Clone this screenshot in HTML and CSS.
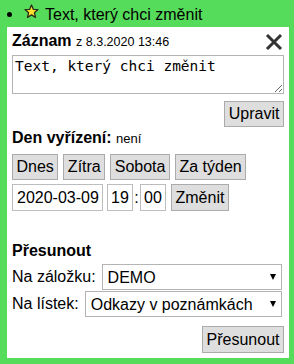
FILE: index.html
```html
<!DOCTYPE html>
<html lang="cs">
<head>
<meta charset="utf-8">
<link rel="stylesheet" href="styles.css">
</head>
<body>
<div class="top">
  <span class="bullet"></span>
  <svg class="star" width="15" height="15" viewBox="0 0 15 15"><polygon points="7.5,1 9.3,5.3 14,5.6 10.4,8.7 11.5,13.4 7.5,10.9 3.5,13.4 4.6,8.7 1,5.6 5.7,5.3" fill="#ffe12e" stroke="#2a2a1a" stroke-width="1.3" stroke-linejoin="round"/></svg>
  <span class="title">Text, který chci změnit</span>
</div>
<div class="panel">
  <div class="head">
    <div><b class="h">Záznam</b> <span class="date">z 8.3.2020 13:46</span></div>
    <svg class="close" width="18" height="18" viewBox="0 0 18 18"><path d="M2 2 L16 16 M16 2 L2 16" stroke="#333" stroke-width="3" fill="none"/></svg>
  </div>
  <textarea class="txt">Text, který chci změnit</textarea>
  <div class="row right r-up"><button class="btn">Upravit</button></div>
  <div class="den"><b class="h">Den vyřízení:</b> <span class="small">není</span></div>
  <div class="row r-quick">
    <button class="btn">Dnes</button>
    <button class="btn">Zítra</button>
    <button class="btn">Sobota</button>
    <button class="btn">Za týden</button>
  </div>
  <div class="row r-date">
    <input class="inp w-date" value="2020-03-09">
    <input class="inp w-time gap-h" value="19">
    <span class="colon">:</span>
    <input class="inp w-time" value="00">
    <button class="btn gap-b">Změnit</button>
  </div>
  <div class="move h">Přesunout</div>
  <div class="row r-sel1">
    <span class="lab">Na záložku:</span>
    <span class="sel"><select><option>DEMO</option></select></span>
  </div>
  <div class="row r-sel2">
    <span class="lab">Na lístek:</span>
    <span class="sel"><select><option>Odkazy v poznámkách</option></select></span>
  </div>
  <div class="row right r-move"><button class="btn tall">Přesunout</button></div>
</div>
</body>
</html>
```
FILE: styles.css
```css
html, body { margin: 0; padding: 0; }
body {
  background: #56dc5b;
  font-family: "Liberation Sans", Arial, sans-serif;
  font-size: 16px;
  line-height: 18px;
  color: #000;
  width: 294px;
  height: 364px;
  overflow: hidden;
}
.top {
  display: flex;
  align-items: flex-start;
  height: 27px;
  padding-left: 7px;
  box-sizing: border-box;
}
.bullet {
  width: 5px;
  height: 5px;
  border-radius: 50%;
  background: #000;
  margin-top: 12px;
  margin-right: 12px;
}
.star { margin-top: 4px; margin-right: 6px; }
.title { margin-top: 6px; }
.panel {
  background: #fff;
  margin: 0 5px 6px 7px;
  padding: 5px;
  box-sizing: border-box;
  height: 331px;
}
.h { font-weight: bold; }
.head {
  display: flex;
  justify-content: space-between;
  align-items: flex-start;
  height: 18px;
}
.date { font-size: 12.5px; }
.close { margin-top: 1px; margin-right: 1px; }
.txt {
  display: block;
  box-sizing: border-box;
  width: 100%;
  height: 39px;
  margin: 5px 0 0;
  padding: 2px 2px;
  border: 1px solid #b4b4b4;
  font-family: "DejaVu Sans Mono", monospace;
  font-size: 14.5px;
  line-height: 17px;
  color: #000;
  resize: vertical;
  outline: none;
}
.row { display: flex; align-items: center; }
.right { justify-content: flex-end; }
.btn {
  font-family: "Liberation Sans", Arial, sans-serif;
  font-size: 16px;
  height: 26px;
  padding: 0 3.5px;
  margin: 0;
  background: #dedede;
  border: 1px solid #ababab;
  border-radius: 0;
  color: #000;
  line-height: 18px;
}
.tall { height: 27px; }
.r-up { margin-top: 7px; }
.den { margin-top: 2px; height: 18px; }
.small { font-size: 13px; }
.r-quick { margin-top: 7px; gap: 5px; }
.r-date { margin-top: 4px; height: 27px; }
.inp {
  box-sizing: border-box;
  height: 27px;
  margin: 0;
  padding: 0 3px;
  border: 1px solid #bdbdbd;
  border-radius: 0;
  font-family: "Liberation Sans", Arial, sans-serif;
  font-size: 16px;
  color: #000;
  background: #fff;
  outline: none;
}
.w-date { width: 91px; padding-left: 4px; }
.w-time { width: 26px; }
.gap-h { margin-left: 4px; }
.colon { width: 7px; text-align: center; }
.gap-b { margin-left: 5px; height: 27px; }
.move { margin-top: 31px; height: 18px; }
.r-sel1 { margin-top: 4px; gap: 6px; height: 26px; }
.r-sel2 { margin-top: 1px; gap: 6px; height: 26px; }
.sel {
  position: relative;
  flex: 1;
  margin-right: 2px;
  display: flex;
}
.sel select {
  -webkit-appearance: none;
  appearance: none;
  width: 100%;
  height: 26px;
  margin: 0;
  padding: 0 20px 0 5px;
  border: 1px solid #b4b4b4;
  border-radius: 0;
  background: #fff;
  font-family: "Liberation Sans", Arial, sans-serif;
  font-size: 16px;
  color: #000;
  outline: none;
}
.sel::after {
  content: "";
  position: absolute;
  right: 6px;
  top: 10px;
  border-left: 3.5px solid transparent;
  border-right: 3.5px solid transparent;
  border-top: 6px solid #000;
}
.r-move { margin-top: 9px; }
```
